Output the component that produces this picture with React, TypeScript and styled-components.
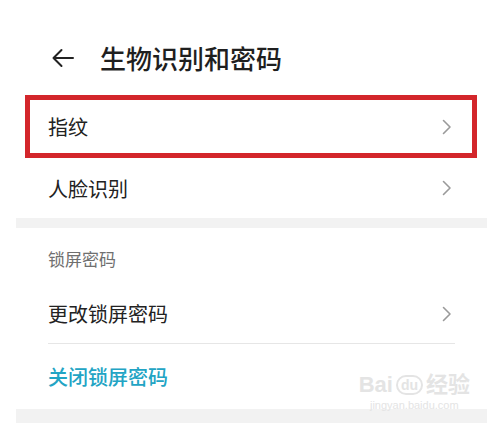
import styled, { createGlobalStyle } from 'styled-components';

const GlobalStyle = createGlobalStyle`
  html, body {
    margin: 0;
    padding: 0;
    background: #ffffff;
  }
  body {
    font-family: "Noto Sans CJK SC", "Noto Sans", sans-serif;
  }
`;

const Chevron = () => (
  <svg width="10" height="16" viewBox="0 0 10 16" fill="none">
    <path d="M1.5 1.5 L8 8 L1.5 14.5" stroke="#9a9a9a" strokeWidth="1.6" strokeLinecap="round" strokeLinejoin="round" />
  </svg>
);

const BackArrow = () => (
  <svg width="24" height="20" viewBox="0 0 24 20" fill="none">
    <path d="M22 10 H2.5 M10.5 2 L2.5 10 L10.5 18" stroke="#222" strokeWidth="2" strokeLinecap="round" strokeLinejoin="round" />
  </svg>
);

export default function App() {
  return (
    <>
      <GlobalStyle />
      <SPage>
        <SHeader>
          <BackArrow />
          <STitle>生物识别和密码</STitle>
        </SHeader>

        <SCard>
          <SRow $height={63} $highlight>
            <SLabel>指纹</SLabel>
            <Chevron />
          </SRow>
          <SRow $height={60}>
            <SLabel>人脸识别</SLabel>
            <Chevron />
          </SRow>
        </SCard>

        <SBand $height={10} />

        <SCard>
          <SSectionTitle>锁屏密码</SSectionTitle>
          <SRow $height={60} $divider>
            <SLabel>更改锁屏密码</SLabel>
            <Chevron />
          </SRow>
          <SRow $height={65}>
            <SLabel $accent>关闭锁屏密码</SLabel>
          </SRow>
        </SCard>

        <SBand $height={14} />

        <SWatermark>
          <SMarkTop>Bai<SPaw>du</SPaw>经验</SMarkTop>
          <SMarkUrl>jingyan.baidu.com</SMarkUrl>
        </SWatermark>
      </SPage>
    </>
  );
}

const SPage = styled.div`
  position: relative;
  width: 498px;
  height: 423px;
  overflow: hidden;
  padding: 0 11px 0 16px;
  box-sizing: border-box;
  background: #ffffff;
`;

const SHeader = styled.div`
  display: flex;
  align-items: center;
  gap: 25px;
  height: 95px;
  padding: 20px 0 0 35px;
  box-sizing: border-box;
`;

const STitle = styled.h1`
  margin: 0;
  font-size: 26px;
  font-weight: 500;
  color: #1f1f1f;
  letter-spacing: 0;
`;

const SCard = styled.div`
  display: flex;
  flex-direction: column;
  background: #ffffff;
  padding: 0 35px 0 32px;
`;

const SRow = styled.div<{ $height: number; $highlight?: boolean; $divider?: boolean }>`
  position: relative;
  display: flex;
  align-items: center;
  justify-content: space-between;
  height: ${(p) => p.$height}px;
  box-sizing: border-box;
  border-bottom: ${(p) => (p.$divider ? '1px solid #e6e6e6' : 'none')};
  margin-right: ${(p) => (p.$divider ? '-3px' : '0')};
  padding-right: ${(p) => (p.$divider ? '3px' : '0')};

  ${(p) =>
    p.$highlight &&
    `
    &::after {
      content: '';
      position: absolute;
      left: -23px;
      right: -25px;
      top: 0;
      bottom: 0;
      border: 5px solid #d3262b;
      pointer-events: none;
    }
  `}
`;

const SLabel = styled.span<{ $accent?: boolean }>`
  font-size: 20px;
  font-weight: ${(p) => (p.$accent ? 500 : 400)};
  color: ${(p) => (p.$accent ? '#22a4c4' : '#222222')};
`;

const SSectionTitle = styled.div`
  display: flex;
  align-items: center;
  height: 56px;
  padding-top: 4px;
  box-sizing: border-box;
  font-size: 17px;
  color: #6f6f6f;
`;

const SBand = styled.div<{ $height: number }>`
  height: ${(p) => p.$height}px;
  background: #f2f2f2;
`;

const SWatermark = styled.div`
  position: absolute;
  right: 28px;
  bottom: 12px;
  display: flex;
  flex-direction: column;
  align-items: center;
  color: #e4e4e4;
  font-family: "Liberation Sans", sans-serif;
  pointer-events: none;
`;

const SMarkTop = styled.div`
  display: flex;
  align-items: center;
  font-size: 22px;
  font-weight: 700;
  line-height: 24px;
  font-family: "Liberation Sans", "Noto Sans CJK SC", sans-serif;
`;

const SPaw = styled.span`
  display: inline-block;
  margin: 0 3px;
  padding: 0 3px;
  border: 2px solid #e4e4e4;
  border-radius: 10px;
  font-size: 14px;
  line-height: 16px;
`;

const SMarkUrl = styled.div`
  font-size: 11px;
  line-height: 12px;
  margin-top: 2px;
`;
